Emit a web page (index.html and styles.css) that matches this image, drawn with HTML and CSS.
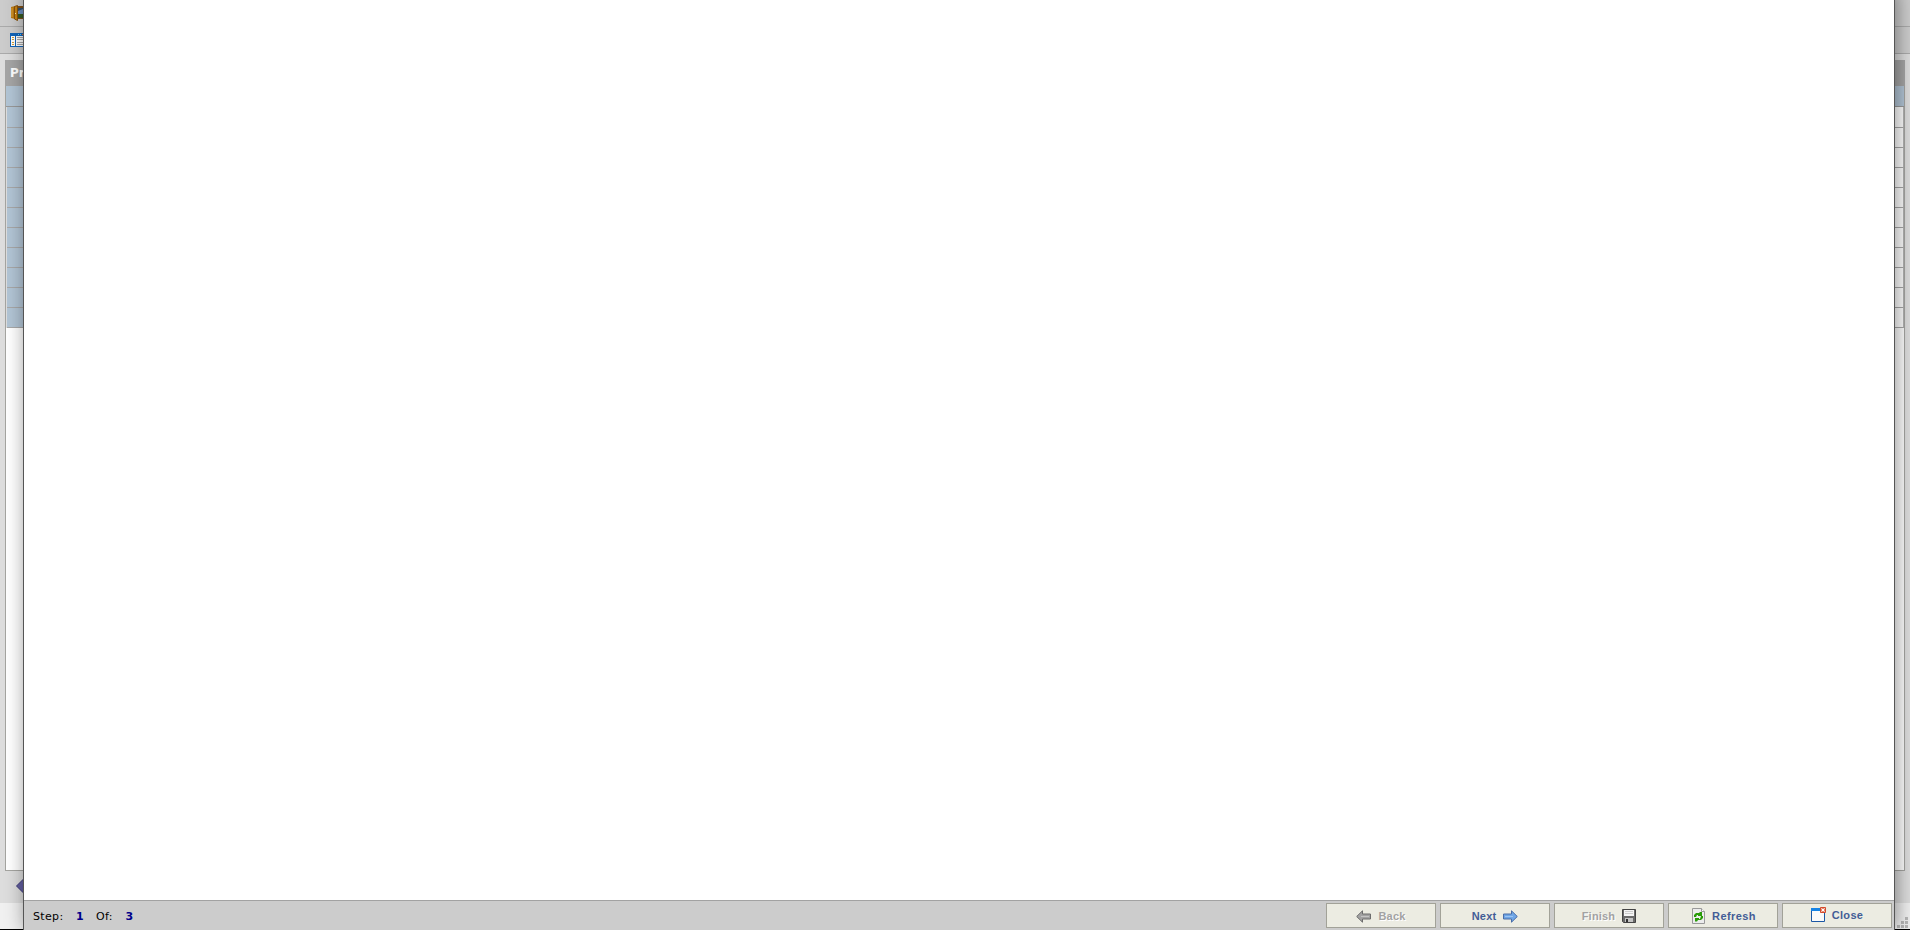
FILE: index.html
```html
<!DOCTYPE html>
<html lang="en">
<head>
<meta charset="utf-8">
<title>Wizard</title>
<link rel="stylesheet" href="styles.css">
</head>
<body>
<div class="page">
  <header class="toolbar">
    <svg class="icon-door" width="16" height="16" viewBox="0 0 16 16"><path d="M6 1h10v13H6z" fill="#805018"/><path d="M7 3h9v10H7z" fill="#34506b"/><path d="M7 6l5-2 4 3v2H7z" fill="#6d8fc0"/><path d="M7 9h9v4H7z" fill="#385c25"/><path d="M0 2l4-1v13l-4-1z" fill="#b87812"/><path d="M1 3v9" stroke="#dba23a"/><path d="M3.500 1.500L6.500.500v15l-3-1.500z" fill="#c98412" stroke="#85500c"/><path d="M4 8h1v1H4z" fill="#fff0b0"/></svg>
  </header>
  <div class="toolbar second">
    <svg class="icon-window" width="16" height="14" viewBox="0 0 16 14"><path d="M0 0h16v14H0z" fill="#1264b8"/><path d="M1 3h4v10H1zM6 3h9v10H6z" fill="#fff"/><path d="M2 4.500h2M2 6.500h2M2 9.500h2M2 11.500h2" stroke="#d9a033"/><path d="M7 4.500h6M7 6.500h6M7 9.500h6M7 11.500h6" stroke="#aaa"/><path d="M8 1h1v1H8zM10 1h1v1h-1z" fill="#5ad0ff"/><path d="M12 1h2v1h-2z" fill="#f06020"/></svg>
  </div>
  <main class="panel">
    <div class="panel-title">Properties</div>
    <div class="row head"></div>
    <div class="rows">
      <div class="row"></div><div class="row"></div><div class="row"></div><div class="row"></div><div class="row"></div><div class="row"></div><div class="row"></div><div class="row"></div><div class="row"></div><div class="row"></div><div class="row"></div>
    </div>
  </main>
  <div class="pager"><svg width="14" height="14" viewBox="0 0 14 14"><path d="M.5 7L7 .5 13.500 7 7 13.500z" fill="#625ea0" stroke="#3c3a78"/></svg></div>
  <div class="status"><svg width="11" height="11" viewBox="0 0 11 11" fill="#b8b8b8"><path d="M8 0h3v3H8zM8 4h3v3H8zM4 4h3v3H4zM8 8h3v3H8zM4 8h3v3H4zM0 8h3v3H0z"/></svg></div>
</div>
<section class="dialog">
  <div class="content"></div>
  <footer class="footer">
    <div class="steps"><span>Step:</span><b>1</b><span>Of:</span><b>3</b></div>
    <div class="buttons">
      <button class="btn off"><svg width="15" height="13" viewBox="0 0 15 13"><path d="M.7 6.500L6.500.800V4h8v5h-8v3.200z" fill="#a2a2a2" stroke="#6c6c6c"/><path d="M5 6.500h8" stroke="#c4c4c4"/></svg>Back</button>
      <button class="btn">Next<svg width="15" height="13" viewBox="0 0 15 13"><path d="M14.300 6.500L8.500.800V4h-8v5h8v3.200z" fill="#6fa6e6" stroke="#4a6ca6"/><path d="M2 6.500h8" stroke="#9cc4f2"/></svg></button>
      <button class="btn off finish">Finish<svg width="14" height="14" viewBox="0 0 14 14"><path d="M.5.500h13v13h-12l-1-1z" fill="#6a6a6a" stroke="#444"/><path d="M2 1h10v6H2z" fill="#f4f4f4"/><path d="M3 2.500h8M3 4.500h8" stroke="#ccc"/><path d="M3 9h8v4H3z" fill="#c4c4c4"/><path d="M4 10h2v3H4z" fill="#333"/></svg></button>
      <button class="btn refresh"><svg width="13" height="16" viewBox="0 0 13 16"><path d="M.5.500h9l3 3v12H.5z" fill="#ececec" stroke="#999"/><path d="M9.500.500v3h3" fill="#fff" stroke="#999"/><path d="M2 9V7l2-2h3l1-1h2v4H6V7H5L4 9zM11 8v2l-2 2H6l-1 1.500H3V10h4v1h1l1-3z" fill="#299b07"/></svg>Refresh</button>
      <button class="btn close"><svg width="15" height="15" viewBox="0 0 15 15"><path d="M.5 1.500h13v13H.5z" fill="#fafafa" stroke="#1b57a4"/><path d="M0 1h14v3H0z" fill="#1683e5"/><path d="M9.500.500h5v5h-5z" fill="#e58870" stroke="#d34a2c"/><path d="M10.500 1.500l3 3M13.500 1.500l-3 3" stroke="#fff"/></svg>Close</button>
    </div>
  </footer>
</section>
</body>
</html>
```
FILE: styles.css
```css
* { box-sizing: border-box; }
body { margin: 0; height: 930px; overflow: hidden; position: relative; background: #ddd; font-family: "DejaVu Sans", sans-serif; font-size: 11px; }
.page { display: flex; flex-direction: column; height: 930px; border-bottom: 1px solid #000; }
.toolbar { height: 27px; padding: 5px 0 0 11px; background: #ccc; border-bottom: 1px solid #aaa; }
.toolbar.second { padding: 6px 0 0 10px; }
.toolbar svg { display: block; }
.panel { margin: 6px 5px 0; height: 811px; background: #fff; border: 1px solid #a5a5a1; border-top: 0; }
.panel-title { height: 26px; margin: 0 -1px; padding: 6px 5px 0; background: #a5a5a5; color: #fff; font-weight: bold; font-size: 12px; line-height: 14px; }
.rows { padding: 0 0 0 1px; background: #ddd; }
.rows .row { height: 20px; border-bottom: 1px solid #a8a8a8; border-right: 1px solid #b4b4b4; background: linear-gradient(90deg, #b2c5d5 50%, #fff 50%); }
.rows .row:first-child { height: 21px; }
.row.head { height: 21px; background: #b2c5d5; border-bottom: 1px solid #999; }
.pager { height: 32px; padding: 8px 0 0 16px; }
.pager svg { display: block; }
.status { flex: 1; background: #f0f0f0; display: flex; justify-content: flex-end; align-items: flex-end; padding: 0 2px 1px; }
.dialog { position: absolute; left: 23px; top: -10px; width: 1872px; height: 940px; display: flex; flex-direction: column; background: #fff; border: 1px solid #555; border-width: 0 1px; box-shadow: 2px 0 18px rgba(0,0,0,.42); }
.content { flex: 1; }
.footer { height: 30px; border-top: 1px solid #a2a2a2; background: #ccc; display: flex; justify-content: space-between; padding: 2px 2px 2px 9px; }
.steps { display: flex; align-items: center; line-height: 13px; padding-top: 2px; letter-spacing: .35px; }
.steps b { color: #00008b; margin: 0 12px 0 12.500px; }
.buttons { display: flex; gap: 4px; }
.btn { width: 110px; height: 25px; padding: 1px 0 0; border: 1px solid #a2a298; background: #ecece2; color: #435d96; font: bold 11px "Liberation Sans", Arial, sans-serif; letter-spacing: .2px; display: flex; align-items: center; justify-content: center; gap: 7px; }
.btn.off { color: #a2a2a2; text-shadow: 1px 1px #fff; }
.btn.finish { gap: 7px; }
.btn.refresh { letter-spacing: .4px; padding-left: 2px; }
.btn.close { gap: 6px; padding: 0 0 2px; letter-spacing: .3px; }
```
